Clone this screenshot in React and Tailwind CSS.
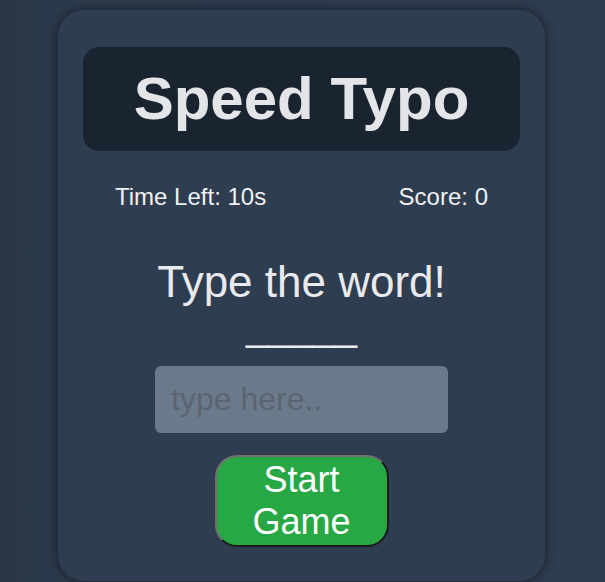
import React, { useState } from 'react';

const App = () => {
  const [value, setValue] = useState('');

  return (
    <div className="min-h-screen bg-[linear-gradient(90deg,#283645_0px,#2d3c4e_90px,#2e3d4f_100%)] font-['Liberation_Sans',Arial,sans-serif]">
      <div className="flex justify-center pr-[2px] pt-[10px]">
        <div className="flex h-[571px] w-[487px] flex-col items-center rounded-[26px] bg-[#2e3d50] px-[25px] pt-[37px] shadow-[0_0_12px_rgba(0,0,0,0.5)]">
          <div className="flex h-[104px] w-full items-center justify-center rounded-[16px] bg-[#1a2431]">
            <h1 className="text-[60px] font-bold leading-none text-[#e3e5e8]">Speed Typo</h1>
          </div>

          <div className="mt-[32px] flex w-full justify-between px-[32px] text-[24px] leading-[28px] text-[#eef0f2]">
            <span>Time Left: 10s</span>
            <span>Score: 0</span>
          </div>

          <h2 className="mt-[46px] text-[44px] leading-[50px] text-[#e8eaed]">Type the word!</h2>
          <p className="mt-[-4px] text-[40px] leading-[46px] text-[#e8eaed]">_____</p>

          <input
            value={value}
            onChange={(e) => setValue(e.target.value)}
            placeholder="type here.."
            className="mt-[17px] h-[67px] w-[293px] rounded-[6px] bg-[#6b7a8a] px-[16px] text-[32px] text-[#1a2431] outline-none placeholder:text-[#5a6571]"
          />

          <button className="mt-[22px] w-[174px] rounded-[22px] border-2 border-t-[#707070] border-l-[#707070] border-r-[#1b1b1b] border-b-[#1b1b1b] bg-[#28a745] py-[2px] text-[36px] leading-[42px] text-white">
            Start Game
          </button>
        </div>
      </div>
    </div>
  );
};

export default App;
